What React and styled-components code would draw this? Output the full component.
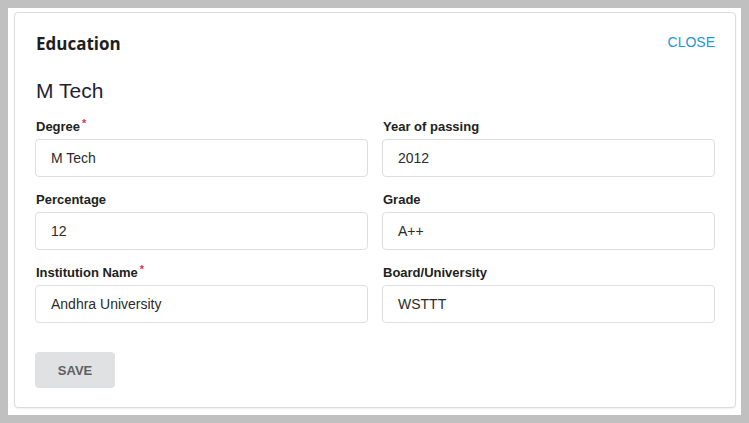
import React from "react";
import styled, { createGlobalStyle } from "styled-components";

const GlobalStyle = createGlobalStyle`
  html {
    background: #c0c0c0;
  }
  body {
    margin: 8px;
    background: #c0c0c0;
    font-family: "Liberation Sans", Arial, sans-serif;
  }
  * {
    box-sizing: border-box;
  }
`;

const fields = [
  { label: "Degree", value: "M Tech", required: true },
  { label: "Year of passing", value: "2012" },
  { label: "Percentage", value: "12" },
  { label: "Grade", value: "A++" },
  { label: "Institution Name", value: "Andhra University", required: true },
  { label: "Board/University", value: "WSTTT" },
];

function App() {
  return (
    <>
      <GlobalStyle />
      <Page>
        <Card>
          <Header>
            <Title>Education</Title>
            <CloseLink>CLOSE</CloseLink>
          </Header>
          <SubTitle>M Tech</SubTitle>
          <FormGrid>
            {fields.map((f) => (
              <Field key={f.label}>
                <Label required={f.required}>{f.label}</Label>
                <Input>{f.value}</Input>
              </Field>
            ))}
          </FormGrid>
          <SaveButton>SAVE</SaveButton>
        </Card>
      </Page>
    </>
  );
}
export default App;

const Page = styled.div`
  background: #ffffff;
  height: 407px;
  padding: 4px 5px 7px 6px;
`;

const Card = styled.div`
  height: 100%;
  background: #ffffff;
  border: 1px solid #dadcdf;
  border-radius: 4px;
  box-shadow: 0 1px 2px rgba(0, 0, 0, 0.06);
  padding: 19px 20px 0 20px;
`;

const Header = styled.div`
  display: flex;
  justify-content: space-between;
  align-items: flex-start;
  height: 24px;
`;

const Title = styled.div`
  font-family: "Open Sans", "Noto Sans", sans-serif;
  font-weight: 700;
  font-size: 17px;
  line-height: 24px;
  color: #1e1e1e;
  padding-left: 1px;
`;

const CloseLink = styled.div`
  font-size: 14px;
  line-height: 20px;
  color: #1a97dd;
`;

const SubTitle = styled.div`
  margin-top: 23px;
  font-size: 21px;
  line-height: 24px;
  color: #1f2333;
  padding-left: 1px;
`;

const FormGrid = styled.div`
  margin-top: 15px;
  display: grid;
  grid-template-columns: 1fr 1fr;
  column-gap: 14px;
  row-gap: 14px;
`;

const Field = styled.div`
  display: flex;
  flex-direction: column;
  gap: 3px;
`;

const Label = styled.div`
  font-size: 13px;
  font-weight: 700;
  line-height: 18px;
  color: #222222;
  padding-left: 1px;

  &::after {
    content: "${(p) => (p.required ? "*" : "")}";
    color: #e0315a;
    font-size: 11px;
    margin-left: 2px;
    vertical-align: top;
    position: relative;
    top: -4px;
  }
`;

const Input = styled.div`
  height: 38px;
  border: 1px solid #dededf;
  border-radius: 4px;
  padding: 0 15px;
  display: flex;
  align-items: center;
  font-size: 14px;
  color: #2b2b2b;
`;

const SaveButton = styled.button`
  margin-top: 29px;
  width: 80px;
  height: 36px;
  border: none;
  border-radius: 4px;
  background: #e0e1e2;
  color: #5f5f5f;
  font-family: "Liberation Sans", Arial, sans-serif;
  font-weight: 700;
  font-size: 13px;
  padding: 0;
`;
